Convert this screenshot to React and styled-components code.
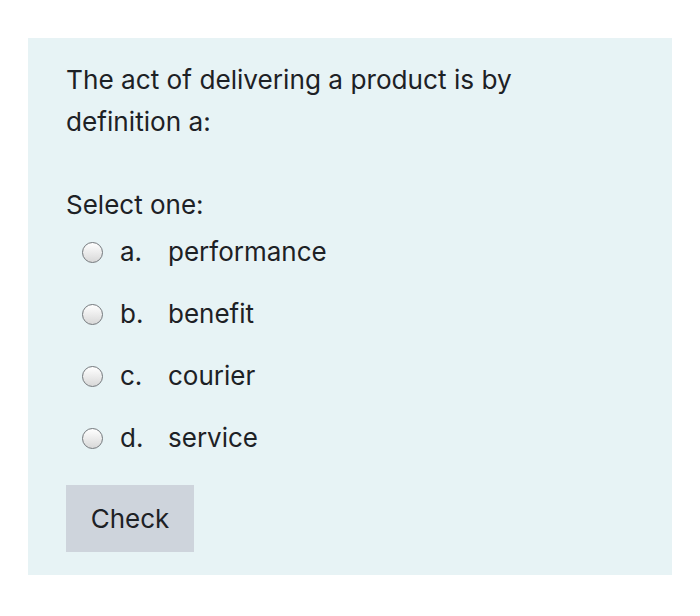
import React from 'react';
import styled, { createGlobalStyle } from 'styled-components';

const GlobalStyle = createGlobalStyle`
  body {
    margin: 0;
    background: #ffffff;
    font-family: Inter, "Liberation Sans", Arial, sans-serif;
    color: #1d2125;
  }
`;

const Page = styled.div`
  width: 700px;
  height: 616px;
  padding: 38px 28px 0;
  box-sizing: border-box;
`;

const Panel = styled.div`
  height: 537px;
  box-sizing: border-box;
  background: #e7f3f5;
  padding: 21px 38px 0;
`;

const Question = styled.div`
  font-size: 26.2px;
  line-height: 42px;
  max-width: 480px;
`;

const Prompt = styled.div`
  font-size: 26px;
  line-height: 30px;
  margin-top: 47px;
`;

const Options = styled.div`
  display: flex;
  flex-direction: column;
  gap: 32px;
  margin-top: 17px;
  padding-left: 16px;
`;

const Option = styled.label`
  display: flex;
  align-items: center;
  font-size: 26px;
  line-height: 30px;
`;

const Radio = styled.span`
  width: 21px;
  height: 21px;
  border-radius: 50%;
  border: 1.5px solid #74787c;
  background: linear-gradient(#ffffff, #d8d8d8);
  box-sizing: border-box;
  margin-right: 17px;
  flex: none;
`;

const Letter = styled.span`
  width: 48px;
`;

const Button = styled.button`
  margin-top: 32px;
  width: 128px;
  height: 67px;
  border: none;
  background: #ced4dc;
  font-family: inherit;
  font-size: 26px;
  color: #1d2125;
  display: block;
`;

const options = [
  { letter: 'a.', text: 'performance' },
  { letter: 'b.', text: 'benefit' },
  { letter: 'c.', text: 'courier' },
  { letter: 'd.', text: 'service' },
];

export default function App() {
  return (
    <>
      <GlobalStyle />
      <Page>
        <Panel>
          <Question>The act of delivering a product is by definition a:</Question>
          <Prompt>Select one:</Prompt>
          <Options>
            {options.map((o) => (
              <Option key={o.letter}>
                <Radio />
                <Letter>{o.letter}</Letter>
                {o.text}
              </Option>
            ))}
          </Options>
          <Button>Check</Button>
        </Panel>
      </Page>
    </>
  );
}
